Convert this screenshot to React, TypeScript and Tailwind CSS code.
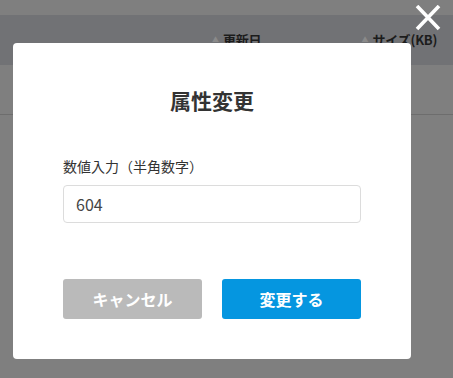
import React from 'react';

const font = { fontFamily: '"Noto Sans CJK JP", "Noto Sans", sans-serif' };

function SortHead({ label, className }: { label: string; className?: string }) {
  return (
    <div className={`flex items-start gap-[4px] ${className ?? ''}`}>
      <span className="text-[7px] leading-none text-[#8a8a8a] mt-[3px]">▲</span>
      <span className="text-[13px] font-bold leading-none text-[#1c1c1c] tracking-[-0.2px]">{label}</span>
    </div>
  );
}

export default function App() {
  return (
    <div className="relative w-[453px] h-[378px] bg-[#7f7f7f] overflow-hidden" style={font}>
      {/* page behind the overlay */}
      <div className="mt-[15px] h-[50px] bg-[#717275] flex pl-[212px] pt-[18px]">
        <SortHead label="更新日" />
        <SortHead label="サイズ(KB)" className="ml-[100px]" />
      </div>
      <div className="h-[50px] border-b border-[#6d6d6d]" />

      {/* close button */}
      <button className="absolute left-[414px] top-[5px] w-[28px] h-[26px]">
        <svg viewBox="0 0 28 26" className="w-full h-full">
          <path d="M3 1 L25 24 M25 1 L3 24" stroke="#fff" strokeWidth="3.6" strokeLinecap="butt" />
        </svg>
      </button>

      {/* modal */}
      <div className="absolute left-[13px] top-[43px] w-[398px] h-[316px] bg-white rounded-[4px] px-[50px] pt-[43px]">
        <h2 className="text-center text-[21px] font-bold leading-[28px] text-[#333]">属性変更</h2>
        <div className="mt-[42px] text-[14px] leading-[20px] text-[#333]">数値入力（半角数字）</div>
        <input
          defaultValue="604"
          className="mt-[9px] w-full h-[38px] border border-[#dcdcdc] rounded-[4px] px-[12px] text-[16px] text-[#444] outline-none"
          style={font}
        />
        <div className="mt-[56px] flex gap-[20px]">
          <button className="w-[139px] h-[40px] rounded-[3px] bg-[#bababa] text-white text-[16px] font-bold">キャンセル</button>
          <button className="w-[139px] h-[40px] rounded-[3px] bg-[#0596e0] text-white text-[16px] font-bold">変更する</button>
        </div>
      </div>
    </div>
  );
}
